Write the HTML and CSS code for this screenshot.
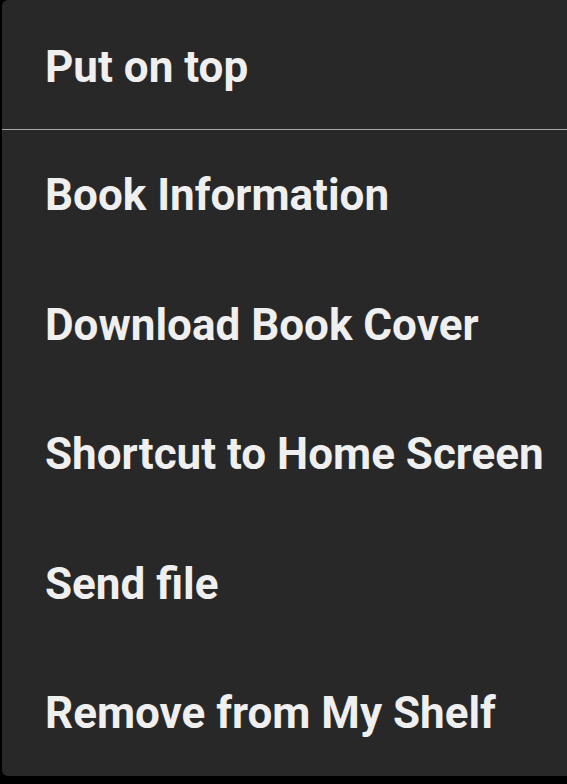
FILE: index.html
```html
<!DOCTYPE html>
<html>
<head>
<meta charset="utf-8">
<link rel="stylesheet" href="styles.css">
</head>
<body>
<div class="menu">
  <div class="item first">Put on top</div>
  <div class="divider"></div>
  <div class="item">Book Information</div>
  <div class="item">Download Book Cover</div>
  <div class="item">Shortcut to Home Screen</div>
  <div class="item">Send file</div>
  <div class="item">Remove from My Shelf</div>
</div>
</body>
</html>
```
FILE: styles.css
```css
html, body {
  margin: 0;
  padding: 0;
  background: #000;
  width: 567px;
  height: 784px;
  overflow: hidden;
}
.menu {
  margin-left: 2px;
  width: 575px;
  height: 776px;
  background: #282828;
  border-radius: 6px;
  overflow: hidden;
  display: flex;
  flex-direction: column;
  font-family: Roboto, "Noto Sans", sans-serif;
  font-weight: 700;
  font-size: 44px;
  color: #efefef;
}
.item {
  flex: none;
  box-sizing: border-box;
  height: 129.5px;
  padding-top: 2px;
  line-height: 127px;
  padding-left: 43px;
  white-space: nowrap;
}
.item.first {
  height: 129px;
  padding-top: 4px;
}
.divider {
  flex: none;
  height: 1px;
  background: #a6a6a6;
}
```
